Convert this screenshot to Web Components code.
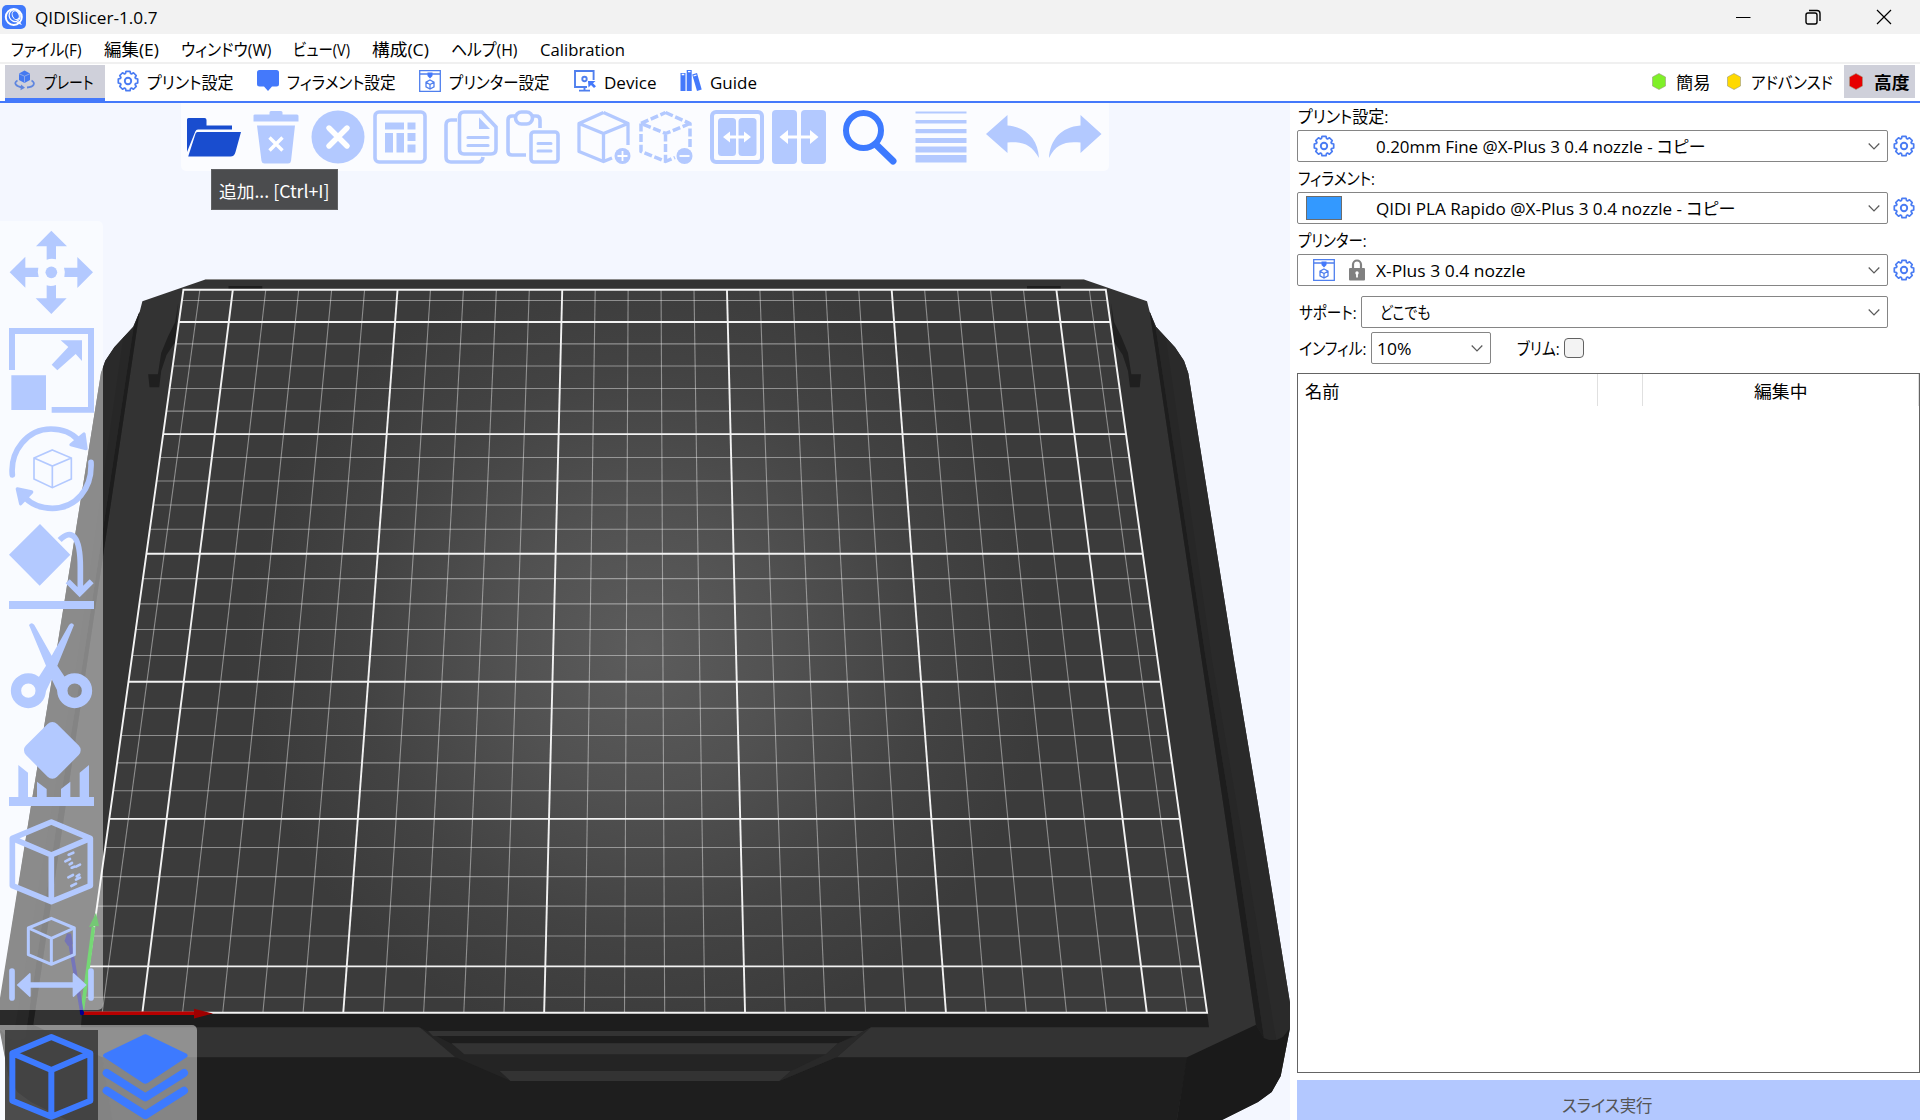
<!DOCTYPE html>
<html lang="ja">
<head>
<meta charset="utf-8">
<title>QIDISlicer-1.0.7</title>
<style>
html,body{margin:0;height:100%;overflow:hidden;background:#fff}
body{font-family:"Open Sans","Noto Sans CJK JP",sans-serif;font-size:17px;color:#000}
</style>
</head>
<body>
<slicer-app></slicer-app>
<script>
const define=(name,css,html,setup)=>customElements.define(name,class extends HTMLElement{
  constructor(){super();this.attachShadow({mode:'open'})}
  connectedCallback(){
    const h=typeof html==='function'?html(this):html;
    this.shadowRoot.innerHTML=`<style>*{box-sizing:border-box}${css}</style>${h}`;
    if(setup)setup(this);
  }
});

define('ui-label',
 `:host{display:block;flex:none;height:24px;line-height:26px;white-space:nowrap;font-feature-settings:"palt"}
  span{display:inline-block;transform-origin:0 50%}`,
 `<span><slot></slot></span>`,
 el=>{
   const w=+el.getAttribute('w'),s=el.shadowRoot.querySelector('span');
   el.style.width=w+'px';
   const r=s.getBoundingClientRect().width;
   if(r)s.style.transform=`scaleX(${(w+.500)/r})`;
 });

const cubeFrame='<path d="M127 9L244 58V200L127 248L10 200V58ZM10 58L127 108L244 58M127 108V248"/>';
const gear=(()=>{
  let p='';const n=8;
  for(let i=0;i<n;i++){
    const a=i*Math.PI/4-Math.PI/2,f=(r,d)=>`${(11+r*Math.cos(a+d)).toFixed(2)} ${(11+r*Math.sin(a+d)).toFixed(2)}`;
    p+=(i?'L':'M')+f(7.9,-.33)+'L'+f(9.9,-.2)+'L'+f(9.9,.2)+'L'+f(7.9,.33);
  }
  return `<g fill="none" stroke="#4a7cf3" stroke-width="1.7" stroke-linejoin="round"><path d="${p}Z"/><circle cx="11" cy="11" r="3.2" stroke-width="1.9"/></g>`;
})();
const L='#b3c9ff',B='#3d7aff';
const pm=(x)=>`<circle cx="45.5" cy="46" r="8" fill="${L}"/><path d="M40.5 46h10${x?'M45.5 41v10':''}" stroke="#fff" stroke-width="1.8" fill="none"/>`;
const icons={
 logo:['0 0 24 24',`<rect width="24" height="24" rx="5" fill="#4079fb"/><ellipse cx="11.8" cy="12" rx="8" ry="8" fill="none" stroke="#fff" stroke-width="2"/><ellipse cx="12.7" cy="11" rx="5.4" ry="6" fill="none" stroke="#fff" stroke-width="1.2" transform="rotate(-25 12 11)"/><ellipse cx="13.5" cy="10.5" rx="3.3" ry="4.5" fill="none" stroke="#fff" stroke-width="1" transform="rotate(-25 13 10)"/><path d="M14 18l6 2-3-4" fill="#fff"/>`],
 gear:['0 0 22 22',gear],
 plater:['0 0 22 22',`<path d="M10.500 .500L16 3.500V10L10.500 13L5 10V3.500Z" fill="#4479f0"/><path d="M5 3.700L10.500 6.200L16 3.700M10.500 6.200V12.500" stroke="#9fb5e8" stroke-width=".8" fill="none"/><path d="M3.500 10.500C-1 13 2 16.500 8 17.500M17.500 10.500C22 13 20 17 13 17.500" fill="none" stroke="#5f86df" stroke-width="1.800"/><path d="M7 14.500L11 17.800L6.500 20.300Z" fill="#5f86df"/>`],
 filament:['0 0 22 22',`<path d="M2.5 0H19.5Q22 0 22 2.5V14Q22 16.5 19.5 16.5H15L11 21L7 16.5H2.5Q0 16.5 0 14V2.5Q0 0 2.5 0Z" fill="#4479fb"/>`],
 printer:['0 0 22 22',`<g fill="none" stroke="#4f7fee" stroke-width="1.3"><path d="M.7.7H21.3V21.3H.7ZM.7 4H21.3"/><path d="M11 10L15 12.2V16.8L11 19L7 16.8V12.2ZM7 12.2L11 14.5L15 12.2M11 14.5V19"/></g><path d="M8.5 2.5H13.5V6L11 8.5L8.5 6Z" fill="#4479fb"/>`],
 device:['0 0 22 22',`<g fill="none" stroke="#4f7fee" stroke-width="1.9"><path d="M19.6 10V1H1V17H13M5 20.6H16M10.5 17V20"/><circle cx="10.500" cy="9" r="2.200"/></g><path d="M14 11H21.5L19 13.2L22 16.2L20 18L17 15L14.5 17.5Z" fill="#4479fb"/>`],
 guide:['0 0 22 22',`<path d="M.5 3H5.5V21H.5ZM6.7 0H11.7V21H6.7Z" fill="#4479fb"/><path d="M12.2 4.5L17 3L21.7 19.5L17 21Z" fill="#4479fb"/><path d="M1.7 4.5H4.3M8 1.7H10.5M13.5 6L16.5 5" stroke="#fff" stroke-width="1.3"/>`],
 lock:['0 0 16 22',`<path d="M4 10V5.5a4 4 0 0 1 8 0V10" fill="none" stroke="#808080" stroke-width="2.2"/><rect y="9" width="16" height="12.5" rx="1" fill="#808080"/><circle cx="8" cy="14" r="1.7" fill="#fff"/><path d="M8 14V18.5" stroke="#fff" stroke-width="1.8"/>`],
 add:['0 0 54 54',`<g fill="#194dcf"><path d="M0 9.5Q0 8 1.5 8H17.5Q19.5 8 19.5 10V15.5H45V19.5H11Q9 19.5 8.3 21.5L0 42Z"/><path d="M10.5 22H54L48.5 42Q47.3 46.5 43.5 46.5H1.2L8.6 23.5Q9 22 10.5 22Z"/></g>`],
 trash:['0 0 54 54',`<g fill="${L}"><path d="M4.5 5.5Q4.5 4.5 6 4.5H20.5V2.5Q20.5 1 22 1H32Q33.5 1 33.5 2.5V4.5H48Q49.5 4.5 49.5 6V11.5H4.5ZM8 15.5H46L42 51Q41.7 53.5 39 53.5H15.5Q13 53.5 12.5 51Z"/></g><path d="M20.500 27.500L33.500 40.500M33.500 27.500L20.500 40.500" stroke="#fff" stroke-width="3.400"/>`],
 del:['0 0 54 54',`<circle cx="27" cy="27" r="26.5" fill="${L}"/><path d="M18 18L36 36M36 18L18 36" stroke="#fff" stroke-width="5.4" stroke-linecap="round"/>`],
 arrange:['0 0 54 54',`<rect x="2" y="2" width="50" height="50" rx="4" fill="none" stroke="${L}" stroke-width="3.6"/><path d="M12 12.5H31V19.5H12ZM34.5 12.5H42.5V19.5H34.5ZM12 23H20V42.5H12ZM23.5 23H31V42.5H23.5ZM34.5 23H42.5V31H34.5ZM34.5 34.5H42.5V42.5H34.5Z" fill="${L}"/>`],
 copy:['0 0 54 54',`<g fill="none" stroke="${L}" stroke-width="3.6"><path d="M13 10H7Q2 10 2 15V47Q2 52 7 52H34Q38.5 52 39 47"/><path d="M20 2H38L52 17V39Q52 44 47 44H20Q15.500 44 15.500 39V7Q15.500 2 20 2Z"/></g><path d="M35 7.500L46 19H35Z" fill="${L}"/><path d="M24 27.500H44M24 35.500H44" stroke="${L}" stroke-width="3.200" stroke-linecap="round"/>`],
 paste:['0 0 54 54',`<g fill="none" stroke="${L}" stroke-width="3.600"><path d="M10 6H6Q2 6 2 10V41Q2 45 6 45H20M26 6H30Q34 6 34 10V18"/><rect x="9.500" y="2" width="17" height="12" rx="6"/><rect x="25" y="22" width="27" height="30" rx="3"/></g><path d="M32 33.500H45M32 41H45" stroke="${L}" stroke-width="3" stroke-linecap="round"/>`],
 cubeadd:['0 0 54 54',`<path d="M26.500 2.500L51 13.500V35M51 13.500L26.500 23.500L2 13.500L26.500 2.500M2 13.500V41.500L26.500 51.500L35 48M26.500 23.500V51.500" fill="none" stroke="${L}" stroke-width="3.300" stroke-linejoin="round"/>${pm(1)}`],
 cubesub:['0 0 54 54',`<path d="M26.500 2.500L51 13.500V38M51 13.500L26.500 23.500L2 13.500L26.500 2.500M2 13.500V41.500L26.500 51.500L36 47.500M26.500 23.500V51.500" fill="none" stroke="${L}" stroke-width="3.500" stroke-dasharray="8 2.600" stroke-linejoin="round"/>${pm(0)}`],
 splito:['0 0 54 54',`<rect x="2" y="2" width="50" height="50" rx="4" fill="none" stroke="${L}" stroke-width="4"/><rect x="8" y="8" width="18" height="38" rx="3.500" fill="${L}"/><rect x="28.500" y="8" width="18" height="38" rx="3.500" fill="${L}"/><path d="M13 27L20 21.500V25.500H34V21.500L41 27L34 32.500V28.500H20V32.500Z" fill="#fff"/>`],
 splitp:['0 0 54 54',`<rect x="0" y="0" width="25" height="54" rx="4" fill="${L}"/><rect x="29" y="0" width="25" height="54" rx="4" fill="${L}"/><path d="M7.500 27L16 20V25.500H38V20L46.500 27L38 34V28.500H16V34Z" fill="#fff"/>`],
 search:['0 0 54 54',`<circle cx="20.500" cy="20.500" r="17.500" fill="none" stroke="${B}" stroke-width="6"/><path d="M33.500 35L50 51" stroke="${B}" stroke-width="7" stroke-linecap="round"/>`],
 lines:['0 0 54 54',`<path d="M1.500 1.500H52.500V3.500H1.500ZM1.500 10H52.500V13.500H1.500ZM1.500 19H52.500V23.200H1.500ZM1.500 28H52.500V33H1.500ZM1.500 36.500H52.500V42.500H1.500ZM1.500 45H52.500V52.500H1.500Z" fill="${L}"/>`],
 undo:['0 0 54 54',`<path d="M1 24L22.500 5V15.500C42 17 53 30 54 48C46 34 37 31 22.500 32.500V43Z" fill="${L}"/>`],
 redo:['0 0 54 54',`<path d="M54.500 24L33.500 5V15.500C14 17 3 30 2 48C9 34 18 31 33.500 32.500V43Z" fill="${L}"/>`],
 move:['0 0 255 255',`<g fill="${L}">${[0,90,180,270].map(a=>`<path transform="rotate(${a} 127 127)" d="M127 2L174 49H141V88Q127 84 113 89V49H81Z"/>`).join('')}<circle cx="127" cy="127" r="17.500"/></g>`],
 scale:['0 0 255 255',`<path fill="${L}" d="M0 0H255V254H128V237H237V18H18V126H0ZM7 142H111V246H7ZM155 37H219V99L200 78L145 127L128 110L178 57Z"/>`],
 rotate:['0 0 255 255',`<g fill="none" stroke="${L}" stroke-width="17" stroke-linecap="round"><path d="M10 147C3 75 55 9 126 9C158 9 188 20 208 42M246 109C250 190 200 247 130 247C95 247 67 235 46 213"/></g><g fill="${L}" stroke="${L}" stroke-width="10" stroke-linejoin="round"><path d="M186 56L225 24L231 68ZM25 189L68 198L35 233Z"/></g><path d="M130 72L187 96V159L130 185L75 159V96ZM75 96L130 120L187 96M130 120V185" fill="none" stroke="${L}" stroke-width="5"/>`],
 place:['0 0 255 255',`<path d="M93 0L184 92L92 185L0 92ZM0 231H255V255H0Z" fill="${L}"/><g fill="none" stroke="${L}" stroke-width="17"><path d="M152 48C188 12 214 35 214 130V207M176 172L212 208L248 172"/></g>`],
 cut:['0 0 255 255',`<g fill="none" stroke="${L}" stroke-width="31"><circle cx="58" cy="203" r="37"/><circle cx="197" cy="203" r="37"/></g><path d="M60 6Q68-4 76 6L128 98L180 6Q188-4 195 6L145 128L169 164L165 218L151 215L128 169L105 217L86 222L88 164L111 128Z" fill="${L}"/>`],
 support:['0 0 255 255',`<rect x="64" y="22" width="132" height="132" rx="20" transform="rotate(45 130 88)" fill="${L}"/><path d="M0 228H28V132L57 155V228H84V182L113 204V228H156V204L184 182V228H212V155L240 132V228H255V255H0Z" fill="${L}"/>`],
 cube:['0 0 255 255',`<g fill="none" stroke="${L}" stroke-width="17" stroke-linejoin="round">${cubeFrame}</g><path d="M179 107L193 101M169 127L183 120M182 136L189 132M188 146L196 143M201 143L213 137M178 175L192 168M203 172L211 167M187 201L201 194M201 182L213 176" stroke="${L}" stroke-width="8" stroke-linecap="round"/>`],
 measure:['0 0 255 255',`<path d="M127 4L196 33V113L127 142L58 113V33ZM58 33L127 64L196 33M127 64V142" fill="none" stroke="${L}" stroke-width="9" stroke-linejoin="round"/><path d="M9 162V243M246 162V243" stroke="${L}" stroke-width="17" stroke-linecap="round"/><path d="M23 204L62 168Q65 168 65 172V196H191V172Q191 168 194 168L233 204L194 240Q191 240 191 236V212H65V236Q65 240 62 240Z" fill="${L}"/>`],
 view3d:['0 0 255 255',`<g fill="none" stroke="${B}" stroke-width="18" stroke-linejoin="round">${cubeFrame}</g>`],
 layers:['0 0 255 255',`<g fill="${B}"><path d="M120 3Q127-1 134 3L251 59Q257 65 251 70L134 147Q127 151 120 147L3 70Q-3 65 3 59Z"/></g><path d="M11 117L127 190L243 117M11 170L127 243L243 170" fill="none" stroke="${B}" stroke-width="24" stroke-linecap="round" stroke-linejoin="round"/>`],
 chev:['0 0 12 12','<path d="M.7 3.500L6 9L11.300 3.500" fill="none" stroke="#5a5a5a" stroke-width="1.200"/>'],
 min:['0 0 16 16','<path d="M1 8.500H15.500" stroke="#000" stroke-width="1"/>'],
 max:['0 0 16 16','<g fill="none" stroke="#000" stroke-width="1.400"><rect x="1" y="4" width="11" height="11" rx="2"/><path d="M4 1.500H12Q15 1.500 15 4.500V12"/></g>'],
 close:['0 0 16 16','<path d="M1 1L15 15M15 1L1 15" stroke="#000" stroke-width="1.200"/>'],
 hex:['0 0 14 17','<path d="M7 .5L13.500 4V13L7 16.500L.5 13V4Z" fill="currentColor" stroke="#9a9a80" stroke-width=".6"/>']
};
define('ui-icon',`:host{display:block;flex:none}svg{display:block;width:100%;height:100%;overflow:visible}`,
 el=>{
   const [vb,body]=icons[el.getAttribute('name')];
   const w=el.getAttribute('w')||22;
   el.style.width=w+'px';el.style.height=(el.getAttribute('h')||w)+'px';
   return `<svg viewBox="${vb}" preserveAspectRatio="none">${body}</svg>`;
 });

define('title-bar',
 `:host{display:flex;align-items:center;height:34px;background:#f2f2f2;padding:0 28px 0 2px}
  ui-label{margin-left:8.500px}.c{margin-left:auto;display:flex;gap:55px;align-items:center}.c :first-child{margin-right:-1px}`,
 `<ui-icon name="logo" w="24"></ui-icon><ui-label w="122">QIDISlicer-1.0.7</ui-label>
  <div class="c"><ui-icon name="min" w="16"></ui-icon><ui-icon name="max" w="16"></ui-icon><ui-icon name="close" w="16"></ui-icon></div>`);

define('menu-bar',
 `:host{display:flex;align-items:center;gap:22.500px;height:30px;padding:2px 11px 0;border-bottom:2px solid #f0f0f0;background:#fff}`,
 [['ファイル(F)',70],['編集(E)',54.500],['ウィンドウ(W)',90],['ビュー(V)',56.500],['構成(C)',56.500],['ヘルプ(H)',66],['Calibration',84.500]]
 .map(([t,w])=>`<ui-label w="${w}">${t}</ui-label>`).join(''));

define('tab-item',
 `:host{display:flex;align-items:center;gap:8px;height:36px;padding:0 12px 1px 8.500px;border-bottom:3px solid transparent}
  :host([on]){background:#cfd0da;border-color:#4479fb}ui-label{padding-top:1px}`,
 el=>`<ui-icon name="${el.getAttribute('icon')}" w="22"></ui-icon><ui-label w="${el.getAttribute('w')}"><slot></slot></ui-label>`);

define('mode-item',
 `:host{display:flex;align-items:center;gap:10.500px;height:33px;padding:0 6.500px 0 5px}
  :host([on]){background:#cfd0da;font-weight:700}ui-icon{color:var(--c)}`,
 el=>`<ui-icon name="hex" w="14" h="17"></ui-icon><ui-label w="${el.getAttribute('w')}"><slot></slot></ui-label>`);

define('tab-bar',
 `:host{display:flex;height:39px;padding:1px 5px 0;background:#fff;border-bottom:2px solid #4479fb;align-items:flex-start}
  nav{display:flex;gap:3.800px}.m{display:flex;margin-left:auto;gap:5px}`,
 `<nav><tab-item on icon="plater" w="49">プレート</tab-item><tab-item icon="gear" w="86">プリント設定</tab-item><tab-item icon="filament" w="108">フィラメント設定</tab-item><tab-item icon="printer" w="100">プリンター設定</tab-item><tab-item icon="device" w="52">Device</tab-item><tab-item icon="guide" w="46.500">Guide</tab-item></nav>
  <div class="m"><mode-item style="--c:#7ff028" w="34">簡易</mode-item><mode-item style="--c:#ffd900" w="81.500">アドバンスド</mode-item><mode-item on style="--c:#e60000" w="35">高度</mode-item></div>`);

/* Printer bed: a 280 mm square with a centred 10 mm grid, seen in perspective. */
define('bed-scene',`:host{display:block;width:1290px;height:1017px}svg{display:block}`,
 ()=>{
  const cx=644.600,ht=461.200,hb=562.500,yt=289.800,yb=1012.800,q=1.212;
  const P=(x,y)=>{const t=y/280,d=(1-t)+q*t,k=(yb-(yb*(1-t)+yt*q*t)/d)/(yb-yt);return [(cx+(x/140-1)*(hb+(ht-hb)*k)).toFixed(2),(yb-(yb-yt)*k).toFixed(2)]};
  const ln=(a,b,s,w)=>`<path d="M${P(...a)}L${P(...b)}" stroke="${s}" stroke-width="${w}"/>`;
  let minor='',major='';
  for(let v=5;v<280;v+=10){
    const M=(v-15)%50===0;
    const s=M?'#f2f2f2':'rgba(255,255,255,.42)',w=M?1.900:1.100;
    const r=ln([v,0],[v,280],s,w)+ln([0,v],[280,v],s,w);
    if(M)major+=r;else minor+=r;
  }
  const edge=`<path d="M${P(0,0)}L${P(0,280)}L${P(280,280)}L${P(280,0)}Z" fill="none" stroke="#f4f4f4" stroke-width="1.900"/>`;
  const side=`<path d="M1149.700 311.700L1156 326.700L1175 347.300L1184 360.700L1188.300 373.300L1234 660L1257.300 800L1290 1003V1028L1283 1036.700L1277 1039.700H1269L1264 1038L1256 1024.700L1222.700 800L1201.700 660Z" fill="#2a2a2a"/>
   <path d="M1149.700 311.700L1156 330L1206 660L1229 800L1264 1038L1256 1024.700L1222.700 800L1201.700 660Z" fill="#1d1d1d"/>
   <path d="M1156 330L1166 338L1212 660L1236 800L1276 1039H1269L1264 1038L1229 800L1206 660Z" fill="#272727"/>
   <path d="M1256 1024.700L1187 1057.300L1176.700 1121H1220L1258 1102L1271.700 1092L1280.700 1076L1290 1028L1283 1036.700L1277 1039.700H1269L1264 1038Z" fill="#1a1a1a"/>
   <path d="M1111 303L1114 322L1121 336L1128 353L1131.300 374.300H1141L1139.700 387.300H1130L1128 371L1122.700 355L1114 342Z" fill="#1f1f1f"/>
   <path d="M1027 282V286H1060.700V289H1027Z" fill="#1d1d1d"/>`;
  return `<svg width="1290" height="1017" viewBox="0 103 1290 1017">
  <defs><radialGradient id="g" gradientUnits="userSpaceOnUse" cx="644" cy="650" r="400"><stop offset="0" stop-color="#5c5c5c"/><stop offset=".35" stop-color="#515151"/><stop offset=".7" stop-color="#434343"/><stop offset="1" stop-color="#3b3b3b"/></radialGradient></defs>
  <rect y="103" width="1290" height="1017" fill="#f4f7ff"/>
  <path d="M205.400 279.500H1084L1147 301.300L1149.700 311.700L1156 326.700L1175 347.300L1184 360.700L1188.300 373.300L1234 660L1257.300 800L1290 1003V1028L1280.700 1076L1271.700 1092L1258 1102L1222 1120H67L31 1102L17.500 1092L8.500 1076L0 1028V1003L32 800L55 660L101 373.300L105.400 360.700L114.400 347.300L133.400 326.700L139.700 311.700L142.400 301.300Z" fill="#333"/>
  <path d="M102 1057.300H1187.500L1176.700 1120H112Z" fill="#1e1e1e"/>
  ${side}<g transform="translate(1289.200 0) scale(-1 1)">${side}</g>
  <path d="M82 1012H1207L1209 1027.300H81Z" fill="#1d1d1d"/>
  <path d="M419.400 1027H871L837 1057L779.500 1081H510.500L455 1057Z" fill="#242424"/>
  <path d="M419.400 1027H871L838 1043.500H451Z" fill="#1d1d1d"/>
  <path d="M428 1031H864L856 1036H433ZM451.500 1043.300H838L826 1054.300H464.300ZM499.700 1071H790.800L779.500 1081H510.500Z" fill="#333"/>
  <path d="M864 1031L871 1027.300L837 1057L779.500 1081L791 1071L826 1054.300L838 1043.300L856 1036Z" fill="#292929"/>
  <path d="M${P(0,0)}L${P(0,280)}L${P(280,280)}L${P(280,0)}Z" fill="url(#g)"/>
  ${minor}${major}${edge}
  <path d="M205.400 279.500H1084" stroke="#8b8b8b"/>
  <path d="M82 1013L93.500 927" stroke="#00b800" stroke-width="3.700"/><path d="M89 927L99 926L96 912.700Z" fill="#009a00"/>
  <path d="M82 1013L70 943" stroke="#000080" stroke-width="3.700"/><path d="M64.500 941L67 933.500H71L73 944L68 946Z" fill="#000078"/>
  <path d="M82 1013.300H194" stroke="#b80000" stroke-width="3.600"/><path d="M194 1008.700L213 1013.500L194 1018.500Z" fill="#9d0000"/><circle cx="82" cy="1013" r="2.200" fill="#000090"/>
  </svg>`;
 });

define('tool-bar',
 `:host{display:flex;background:rgba(255,255,255,.46)}
  :host([kind=top]){gap:8px;padding:7px 6px 7px;height:68px;width:928px;background:rgba(255,255,255,.6);border-radius:0 0 5px 5px}
  :host([kind=left]){flex-direction:column;gap:13.200px;padding:8.800px 9px;width:103px;height:789px;border-radius:0 5px 5px 0}
  :host([kind=bottom]){width:197px;height:95px;padding:5px 5px 0;border-radius:0 5px 0 0}
  ::slotted([sep]){margin-left:9px}`,
 `<slot></slot>`);

define('view-button',
 `:host{display:flex;padding:4px 5px 0 4px;width:93px;height:90px}:host([on]){background:rgba(62,62,62,.93)}`,
 `<slot></slot>`);

define('bed-view',
 `:host{display:block;position:relative;width:1290px;height:1017px;overflow:hidden;flex:none}
  .t,.l,.b,.tip{position:absolute}.t{left:181px;top:0}.l{left:0;top:118px}.b{left:0;top:922px}
  .tip{left:211px;top:66px;width:127px;height:41px;background:#4b4c4e;border:1px solid #606163;color:#fff;display:flex;align-items:center;padding:1px 0 0 7px;font-family:"Noto Sans CJK JP",sans-serif;font-size:17.500px}`,
 `<bed-scene></bed-scene>
  <tool-bar class="t" kind="top">${'add trash del arrange copy* paste cubeadd* cubesub splito* splitp search* lines* undo* redo'.split(' ').map(n=>`<ui-icon w="54" name="${n.replace('*','')}" ${n.endsWith('*')?'sep':''}></ui-icon>`).join('')}</tool-bar>
  <tool-bar class="l" kind="left">${'move scale rotate place cut support cube measure'.split(' ').map(n=>`<ui-icon w="85" name="${n}"></ui-icon>`).join('')}</tool-bar>
  <tool-bar class="b" kind="bottom"><view-button on><ui-icon w="85" name="view3d"></ui-icon></view-button><view-button><ui-icon style="margin-left:1px" w="85" name="layers"></ui-icon></view-button></tool-bar>
  <div class="tip"><ui-label w="110">追加... [Ctrl+I]</ui-label></div>`);

define('combo-box',
 `:host{display:flex;align-items:center;height:32px;border:1px solid #858585;border-radius:2px;background:#fff;padding:0 7px 0 0;flex:none}
  ui-icon{margin-left:auto}.i{width:var(--lead,78px);height:100%;display:flex;align-items:center;flex:none;padding-left:var(--pad,15px);gap:14px}`,
 el=>`<div class="i"><slot name="lead"></slot></div><ui-label w="${el.getAttribute('w')}"><slot></slot></ui-label><ui-icon name="chev" w="12"></ui-icon>`);

define('object-list',
 `:host{display:block;height:700px;border:1px solid #646464;background:#fff}
  .h{display:flex;height:32px}.h div{display:flex;align-items:center;justify-content:center;border-right:1px solid #e0e0e0;padding-top:1px}
  .h div:nth-child(1){width:300px;justify-content:flex-start;padding-left:7px}.h div:nth-child(2){width:45px}.h div:nth-child(3){flex:1}`,
 `<div class="h"><div><ui-label w="34">名前</ui-label></div><div></div><div><ui-label w="53">編集中</ui-label></div></div>`);

define('side-panel',
 `:host{display:flex;flex-direction:column;flex:1;padding-left:7px;background:#fff}
  .lb{height:27px;padding:1px 0 0 1px;flex:none}.lb+.r{height:32px}.r{display:flex;align-items:center;gap:5px;flex:none}.g{margin-bottom:3px}
  .w{width:591px}.sw{display:block;width:36px;height:24px;background:#3399ff;border:1px solid #6c6c6c;margin-left:-7px}
  .ck{width:20px;height:20px;border:1px solid #626262;border-radius:4px;background:#f3f3f3}
  .btn{height:40px;background:#b3c8ff;margin-top:7px;display:flex;align-items:center;justify-content:center;color:#555;padding:9px 3px 0 0;flex:none}`,
 `<div class="lb"><ui-label w="90">プリント設定:</ui-label></div>
  <div class="r g"><combo-box class="w" w="329"><ui-icon slot="lead" name="gear"></ui-icon>0.20mm Fine @X-Plus 3 0.4 nozzle - コピー</combo-box><ui-icon name="gear"></ui-icon></div>
  <div class="lb"><ui-label w="76.500">フィラメント:</ui-label></div>
  <div class="r g"><combo-box class="w" w="359"><i class="sw" slot="lead"></i>QIDI PLA Rapido @X-Plus 3 0.4 nozzle - コピー</combo-box><ui-icon name="gear"></ui-icon></div>
  <div class="lb"><ui-label w="68">プリンター:</ui-label></div>
  <div class="r"><combo-box class="w" w="149"><ui-icon slot="lead" name="printer"></ui-icon><ui-icon slot="lead" name="lock" w="16" h="22"></ui-icon>X-Plus 3 0.4 nozzle</combo-box><ui-icon name="gear"></ui-icon></div>
  <div class="r" style="margin-top:10px;padding-left:2px"><ui-label w="57">サポート:</ui-label><combo-box style="width:527px;--lead:18px" w="50">どこでも</combo-box></div>
  <div class="r" style="margin-top:4px;padding-left:2px"><ui-label w="67">インフィル:</ui-label><combo-box style="width:120px;--lead:5px;--pad:0px" w="34">10%</combo-box><ui-label style="margin-left:21px" w="42">ブリム:</ui-label><i class="ck"></i></div>
  <object-list style="margin-top:9px"></object-list>
  <div class="btn"><ui-label w="90">スライス実行</ui-label></div>`);

define('slicer-app',
 `:host{display:flex;flex-direction:column;width:1920px;height:1120px;overflow:hidden}
  main{display:flex;flex:1}`,
 `<title-bar></title-bar><menu-bar></menu-bar><tab-bar></tab-bar><main><bed-view></bed-view><side-panel></side-panel></main>`);
</script>
</body>
</html>
